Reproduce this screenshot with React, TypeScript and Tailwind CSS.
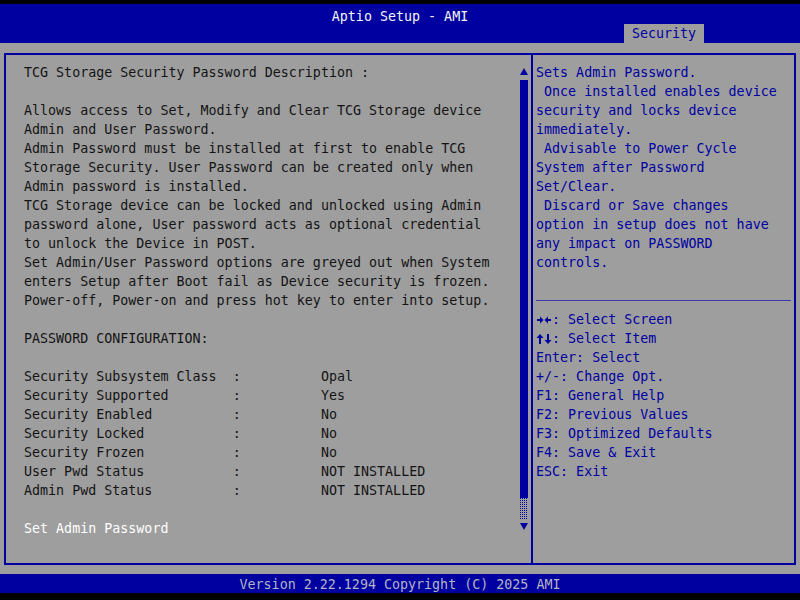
const MONO = { fontFamily: '"DejaVu Sans Mono", "Liberation Mono", monospace' }

const LEFT = [
  'TCG Storage Security Password Description :',
  '',
  'Allows access to Set, Modify and Clear TCG Storage device',
  'Admin and User Password.',
  'Admin Password must be installed at first to enable TCG',
  'Storage Security. User Password can be created only when',
  'Admin password is installed.',
  'TCG Storage device can be locked and unlocked using Admin',
  'password alone, User password acts as optional credential',
  'to unlock the Device in POST.',
  'Set Admin/User Password options are greyed out when System',
  'enters Setup after Boot fail as Device security is frozen.',
  'Power-off, Power-on and press hot key to enter into setup.',
  '',
  'PASSWORD CONFIGURATION:',
  '',
  'Security Subsystem Class  :          Opal',
  'Security Supported        :          Yes',
  'Security Enabled          :          No',
  'Security Locked           :          No',
  'Security Frozen           :          No',
  'User Pwd Status           :          NOT INSTALLED',
  'Admin Pwd Status          :          NOT INSTALLED',
  '',
]

const HELP_TEXT = [
  'Sets Admin Password.',
  ' Once installed enables device',
  'security and locks device',
  'immediately.',
  ' Advisable to Power Cycle',
  'System after Password',
  'Set/Clear.',
  ' Discard or Save changes',
  'option in setup does not have',
  'any impact on PASSWORD',
  'controls.',
]

// little bold arrow pairs as the firmware font draws them
function ArrowsLR() {
  return (
    <svg width="16" height="19" viewBox="0 0 16 19" fill="#0000a0">
      <rect x="1" y="9" width="4" height="2" />
      <polygon points="4,6.5 7.5,10 4,13.5" />
      <rect x="11" y="9" width="4" height="2" />
      <polygon points="12,6.5 8.5,10 12,13.5" />
    </svg>
  )
}

function ArrowsUD() {
  return (
    <svg width="16" height="19" viewBox="0 0 16 19" fill="#0000a0">
      <polygon points="4,5 7.5,9 0.5,9" />
      <rect x="3" y="8" width="2" height="7" />
      <rect x="11" y="5" width="2" height="7" />
      <polygon points="8.5,11 15.5,11 12,15" />
    </svg>
  )
}

const KEYS = [
  { icon: <ArrowsLR />, rest: ': Select Screen' },
  { icon: <ArrowsUD />, rest: ': Select Item' },
  { icon: null, rest: 'Enter: Select' },
  { icon: null, rest: '+/-: Change Opt.' },
  { icon: null, rest: 'F1: General Help' },
  { icon: null, rest: 'F2: Previous Values' },
  { icon: null, rest: 'F3: Optimized Defaults' },
  { icon: null, rest: 'F4: Save & Exit' },
  { icon: null, rest: 'ESC: Exit' },
]

function Line({ text, className = '' }: { text: string; className?: string }) {
  return <div className={`h-[19px] leading-[19px] whitespace-pre ${className}`}>{text || '\u00a0'}</div>
}

function ScrollBar() {
  return (
    <div className="mr-[3px] flex w-[8px] flex-col items-center pt-[12px]">
      <svg width="8" height="8" viewBox="0 0 8 8">
        <polygon points="4,1 8,8 0,8" fill="#0000a0" />
      </svg>
      <div className="mt-[5px] h-[418px] w-[8px] bg-[#0000a0]" />
      <svg width="8" height="22" viewBox="0 0 8 22">
        <defs>
          <pattern id="dots" width="2" height="2" patternUnits="userSpaceOnUse">
            <rect width="1" height="1" fill="#0000a0" />
          </pattern>
        </defs>
        <rect width="8" height="22" fill="url(#dots)" />
      </svg>
      <svg className="mt-[3px]" width="8" height="7" viewBox="0 0 8 7">
        <polygon points="0,0 8,0 4,7" fill="#0000a0" />
      </svg>
    </div>
  )
}

export default function App() {
  return (
    <div className="flex h-[600px] w-[800px] flex-col bg-black text-[13.33px]" style={MONO}>
      <header className="mt-[4px] flex h-[39px] flex-col bg-[#0000a0]">
        <div className="h-[20px] pt-[3px] text-center leading-[19px] text-[#f4f4f4]">Aptio Setup - AMI</div>
        <div className="flex flex-1 justify-end pr-[96px]">
          <div className="w-[80px] bg-[#9e9e9e] pt-[1px] text-center leading-[18px] text-[#0000a0]">Security</div>
        </div>
      </header>

      <main className="flex flex-1 flex-col bg-[#9e9e9e] px-[4px] pb-[9px] pt-[10px]">
        <div className="flex flex-1 border-2 border-[#0000a0]">
          <section className="flex w-[525px] text-[#141414]">
            <div className="flex-1 pl-[18px] pt-[8px]">
              {LEFT.map((l, i) => (
                <Line key={i} text={l} />
              ))}
              <Line text="Set Admin Password" className="text-white" />
            </div>
            <ScrollBar />
          </section>

          <aside className="flex flex-1 flex-col border-l-2 border-[#0000a0] text-[#0000a0]">
            <div className="mx-[3px] h-[246px] border-b border-[#3a3aa8] pt-[8px]">
              {HELP_TEXT.map((l, i) => (
                <Line key={i} text={l} />
              ))}
            </div>
            <div className="px-[3px] pt-[9px]">
              {KEYS.map((r, i) => (
                <div key={i} className="flex h-[19px] whitespace-pre leading-[19px]">
                  {r.icon}
                  <span>{r.rest}</span>
                </div>
              ))}
            </div>
          </aside>
        </div>
      </main>

      <footer className="h-[19px] bg-[#0000a0] pt-[1px] text-center leading-[19px] text-[#b4b4c4]">
        Version 2.22.1294 Copyright (C) 2025 AMI
      </footer>
      <div className="h-[7px]" />
    </div>
  )
}
